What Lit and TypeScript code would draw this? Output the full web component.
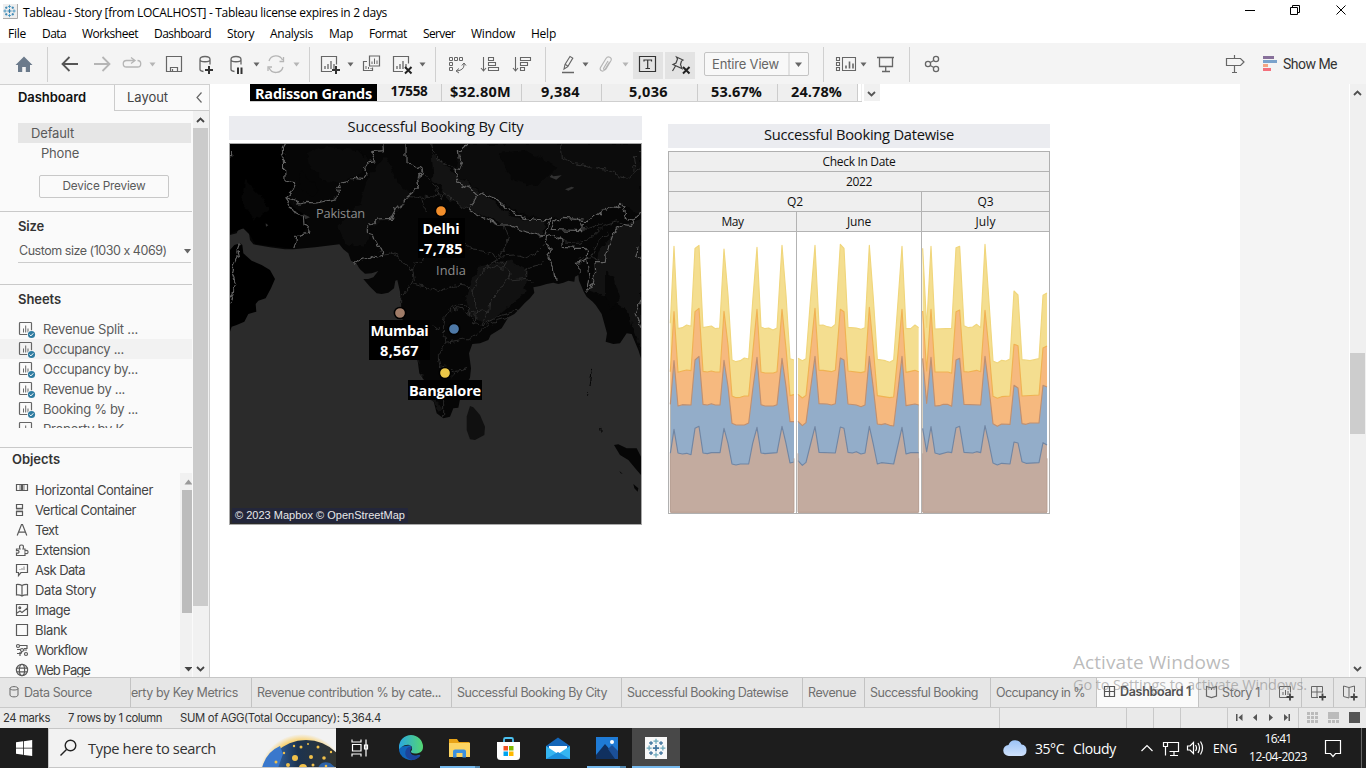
import { LitElement, html, svg, css } from "lit";
import { customElement, property } from "lit/decorators.js";

/** A single line of text tracked so that it spans a given width. */
@customElement("fit-text")
class FitText extends LitElement {
  @property() text = "";
  @property({ type: Number }) w = 0;
  static styles = css`
    :host { display: inline-block; flex: none; white-space: pre; text-align: left; }
    span { display: inline-block; margin-right: -4px; }
  `;
  render() { return html`<span>${this.text}</span>`; }
  updated() {
    this.style.width = this.w + "px";
    const s = this.renderRoot.querySelector("span") as HTMLElement;
    s.style.letterSpacing = "0px";
    const n = s.getBoundingClientRect().width;
    s.style.letterSpacing = (this.w - n) / Math.max(1, this.text.length) + "px";
  }
}

const T = (text: string, w: number, cls = "") => html`<fit-text class=${cls} .text=${text} .w=${w}></fit-text>`;
const I = (x: number, y: number, w: number, h: number, body: unknown, cls = "") =>
  html`<svg class=${"ic " + cls} width=${w} height=${h} viewBox="${x} ${y} ${w} ${h}">${body}</svg>`;

const caret = (x: number, c = "#666") => svg`<path d="M${x} 62.5h6l-3 4z" fill=${c}/>`;
const sep = (x: number) => svg`<path d="M${x}.5 47v35" stroke="#d0d0d0"/>`;
const bars = (x: number, y: number) => svg`<path d="M${x} ${y}v-3M${x + 3} ${y}v-5M${x + 6} ${y}v-8M${x + 9} ${y}v-5" stroke="#666" stroke-width="1.3"/>`;
const plus = (x: number, y: number) => svg`<path d="M${x - 4} ${y}h8M${x} ${y - 4}v8" stroke="#333" stroke-width="2"/>`;
const cross = (x: number, y: number) => svg`<path d="M${x - 3} ${y - 3}l6.5 6.5m0-6.5l-6.5 6.5" stroke="#222" stroke-width="2"/>`;
const cyl = (x: number) => svg`<path d="M${x} 59.5c0-4 10-4 10 0c0 3-10 3-10 0v10q0 1.500 3.500 2M${x + 10} 59.500v5" fill="none" stroke="#666" stroke-width="1.3"/>`;

const CLUSTER = (x: number, y: number, s: number, c1: string, c2: string) => svg`<g transform="translate(${x} ${y}) scale(${s})" fill="none">
  <path d="M-2.500 0h5M0-2.500v5" stroke=${c1} stroke-width="1.4"/>
  <path d="M-2-5.500h4M0-7.500v4M-2 5.500h4M0 3.500v4M-7.500 0h4M-5.500-2v4M3.500 0h4M5.500-2v4" stroke=${c2}/>
  <path d="M-5.500-4h3M-4-5.500v3M2.500-4h3M4-5.500v3M-5.500 4h3M-4 2.500v3M2.500 4h3M4 2.500v3" stroke=${c1} stroke-width="1.100"/></g>`;

const TOOLS = [
  I(0, 43, 60, 41, svg`<path d="M15.500 65l8.500-8.500 8.500 8.500h-2.500v7h-4.200v-5h-3.600v5h-4.200v-7z" fill="#6b7a8b"/>${sep(47)}`),
  I(60, 43, 30, 41, svg`<path d="M78 64h-15M69.500 57l-7 7 7 7" fill="none" stroke="#555" stroke-width="1.8"/>`),
  I(90, 43, 30, 41, svg`<path d="M94 64h15M102.500 57l7 7-7 7" fill="none" stroke="#b5b5b5" stroke-width="1.8"/>`),
  I(120, 43, 43, 41, svg`<path d="M134 60.500h-7.500a3.200 3.200 0 0 0 0 6.500h11a3.200 3.200 0 0 0 0-6.500M131 57.500l4 3-4 3" fill="none" stroke="#b5b5b5" stroke-width="1.300"/>${caret(149.500, "#b5b5b5")}`),
  I(163, 43, 30, 41, svg`<path d="M166.500 56.500h15v15h-15zM170.500 71v-3.500h7v3.500M172.500 69v2.500" fill="none" stroke="#666" stroke-width="1.200"/>`),
  I(193, 43, 32, 41, svg`${cyl(200)}${plus(209, 70)}`),
  I(225, 43, 38, 41, svg`${cyl(231)}<path d="M238 67.500v6.500M241.500 67.500v6.500" stroke="#333" stroke-width="2"/>${caret(253.500)}`),
  I(263, 43, 54, 41, svg`<path d="M269 61a7.300 7.300 0 0 1 13.500-1M283 67a7.300 7.300 0 0 1-13.800 1M283.500 57v4.500h-4M268 71v-4h4" fill="none" stroke="#b5b5b5" stroke-width="1.300"/>${caret(293.500, "#b5b5b5")}${sep(309)}`),
  I(317, 43, 42, 41, svg`<path d="M332 71.500h-10.500v-15h15v8" fill="none" stroke="#666" stroke-width="1.200"/>${bars(325, 69)}${plus(336, 70)}${caret(347.500)}`),
  I(359, 43, 30, 41, svg`<path d="M369.500 56h10v10h-10zM367 61.500h-3.500v9h9v-3" fill="none" stroke="#666" stroke-width="1.200"/><path d="M372 64v-2.500M374.500 64v-5.500M377 64v-3.500M366 69v-3M368.500 69v-2M371 69v-1" stroke="#666"/>`),
  I(389, 43, 56, 41, svg`<path d="M403 71.500h-9.500v-15h15v7" fill="none" stroke="#666" stroke-width="1.200"/>${bars(397, 69)}${cross(408, 70)}${caret(419.500)}${sep(435)}`),
  I(445, 43, 33, 41, svg`<path d="M449.500 57.500h3v3h-3zM454.500 57.500h3v3h-3zM459.500 57.500h3v3h-3zM449.500 62.500h3v3h-3zM449.500 67.500h3v3h-3zM464 63v2q0 5-7 6M461.800 65.500l2.200-2.500 2 2.500M459 68.500l-3 2.500 3 2" fill="none" stroke="#666"/>`),
  I(478, 43, 32, 41, svg`<path d="M483.500 57v14M481 68l2.500 3 2.500-3M488.500 57.500h5v3h-5zM488.500 62.500h7v3h-7zM488.500 67.500h10v3h-10z" fill="none" stroke="#666" stroke-width="1.100"/>`),
  I(510, 43, 45, 41, svg`<path d="M515.500 57v14M513 68l2.500 3 2.500-3M520.500 57.500h10v3h-10zM520.500 62.500h7v3h-7zM520.500 67.500h4v3h-4z" fill="none" stroke="#666" stroke-width="1.100"/>${sep(545)}`),
  I(555, 43, 38, 41, svg`<path d="M564 69l1-4.500 5-8 2.800 1.600-5 8.500-3.800 2.400zM565.500 64.500l2.500 1.700" fill="none" stroke="#666" stroke-width="1.100"/><path d="M562 72.500h12" stroke="#666" stroke-width="1.500"/>${caret(582.500)}`),
  I(593, 43, 40, 41, svg`<path d="M609.500 62l-4.500 7.500c-2 3-6 1-4.500-2l5.500-9c2-3 6.500-1 5 2l-5 8.500c-1 1.500-3 .5-2.200-1l4.200-7" fill="none" stroke="#b5b5b5" stroke-width="1.200"/>${caret(622.500, "#b5b5b5")}`),
  I(633, 43, 32, 41, svg`<path d="M633 52h30v27h-30z" fill="#e3e3e3"/><path d="M639.500 56.500h16v15h-16zM644 61.500v-1.500h7.500v1.500M647.700 60v8M645.500 68.500h4.500" fill="none" stroke="#333" stroke-width="1.200"/>`),
  I(665, 43, 39, 41, svg`<path d="M665 52h30v27h-30z" fill="#e3e3e3"/><path d="M676.500 57l6.500 3-1.500 1-1 3.500 1.500 4-9-4 3-1.500 1.500-4zM675.500 66l-3 5" fill="none" stroke="#444" stroke-width="1.200"/>${cross(686, 70)}`),
];

const TOOLS2 = [
  I(809, 43, 65, 41, svg`${sep(823)}<path d="M836.500 57.500h3v3h-3zM836.500 62.500h3v3h-3zM836.500 67.500h3v3h-3zM842.500 57.500h13v13h-13z" fill="none" stroke="#666" stroke-width="1.100"/><path d="M846 68.500v-3M849.500 68.500v-7M853 68.500v-5" stroke="#666" stroke-width="1.600"/>${caret(860.500)}`),
  I(874, 43, 45, 41, svg`<path d="M877 57.500h17M879.500 58v8.500h13v-8.500M885.700 67v4M882 71.500h8" fill="none" stroke="#666" stroke-width="1.300"/>${sep(909)}`),
  I(919, 43, 30, 41, svg`<g fill="none" stroke="#666" stroke-width="1.300"><circle cx="928" cy="64" r="2.600"/><circle cx="936" cy="59" r="2.600"/><circle cx="936" cy="69" r="2.600"/><path d="M930.300 62.500l3.500-2M930.300 65.500l3.500 2"/></g>`),
];

const SHEETS: [string, number][] = [["Revenue Split ...", 95], ["Occupancy ...", 81], ["Occupancy by...", 95], ["Revenue by ...", 82], ["Booking % by ...", 95], ["Property by K", 81]];
const sheetIcon = () => I(18, 319, 24, 20, svg`<rect x="19.500" y="322.500" width="12" height="12" rx=".8" fill="none" stroke="#666" stroke-width="1.200"/><path d="M23.500 332.500v-4M25.700 332.500v-7M28 332.500v-4" stroke="#666"/><circle cx="31.500" cy="334.500" r="4.300" fill="#fafafa"/><circle cx="31.500" cy="334.500" r="3.600" fill="#2f7ba0"/><path d="M29.600 334.500l1.300 1.400 2.400-2.600" fill="none" stroke="#fff"/>`);

const g = (d: unknown) => I(14, 0, 18, 20, svg`<g fill="none" stroke="#5a5a5a" stroke-width="1.200">${d}</g>`);
const OBJECTS: [string, number, unknown][] = [
  ["Horizontal Container", 118, g(svg`<path d="M19 5h6v6h-6z" fill="#bbb" stroke="none"/><path d="M16.500 4.500h5v6h-5zM22.500 4.500h5v6h-5z"/>`)],
  ["Vertical Container", 101, g(svg`<path d="M16 7.500h7v5h-7z" fill="#bbb" stroke="none"/><path d="M16.500 4.500h6v4h-6zM16.500 11.500h6v4h-6z"/>`)],
  ["Text", 23, g(svg`<path d="M17.200 15.500l4.300-11h1l4.300 11M18.500 12.200h7"/>`)],
  ["Extension", 55, g(svg`<path d="M16.500 9h3.500q-1.500-4 1.500-4t1.500 4h2v2q3-1.500 3 1t-3 1v2.500h-8.500v-2.500q2.500.5 2.500-1.200t-2.500-1.200z"/>`)],
  ["Ask Data", 50, g(svg`<path d="M16.500 4.500h11v8h-6.500l-2.500 3v-3h-2z"/><path d="M20 10v-1M22 10v-2M24 10v-3.500" stroke="#999"/>`)],
  ["Data Story", 61, g(svg`<path d="M22 5.500q-2-1.200-5.500-1v10.500q3.500-.2 5.500 1q2-1.200 5.500-1v-10.500q-3.500-.2-5.500 1v10.500"/>`)],
  ["Image", 35, g(svg`<path d="M16.500 4.500h11v11h-11zM17 13l3-2 2 1.500 5.500-4.500"/><circle cx="19.800" cy="7.800" r=".9"/>`)],
  ["Blank", 32, g(svg`<path d="M16.500 4.500h11v11h-11z"/>`)],
  ["Workflow", 52, g(svg`<circle cx="18" cy="6" r="1.500"/><circle cx="22" cy="10" r="1.500"/><circle cx="26" cy="14" r="1.500"/><path d="M20 5.500h7v3h-3M17 9.500h3M17 13.500h4l1-2M20 12v4M24 10h3"/>`)],
  ["Web Page", 55, g(svg`<circle cx="22" cy="10" r="5.600"/><ellipse cx="22" cy="10" rx="2.600" ry="5.600"/><path d="M16.500 8.200h11M16.500 11.800h11"/>`)],
];

/* Upper edge of each stacked band, one list per month pane (three units to a pixel). */
const MONTHS = [
  { x0: 31, x1: 402, bands: [
    "31,625 42,394 54,641 67,638 80,630 93,634 105,400 117,391 129,638 154,633 166,641 179,639 192,402 204,540 216,735 228,740 241,737 253,729 266,732 278,560 291,397 303,636 315,641 326,639 339,645 351,639 366,391 378,540 390,731 402,735",
    "31,770 42,590 54,772 67,768 80,765 93,767 105,590 117,580 129,769 142,771 154,768 166,771 180,771 192,589 204,690 216,843 228,848 241,847 253,843 266,843 278,715 291,583 303,771 315,774 340,774 351,770 366,583 378,700 390,842 402,839",
    "31,868 42,737 54,873 67,869 93,870 105,735 117,724 129,868 142,870 154,866 166,870 180,870 192,736 204,815 216,925 228,930 253,930 266,924 278,825 291,727 303,869 315,873 340,873 351,869 366,730 378,815 390,920 402,920",
    "31,1015 42,943 54,1014 67,1017 80,1015 93,1019 105,940 117,934 129,1014 142,1016 154,1013 180,1013 192,940 204,985 216,1047 228,1050 241,1047 266,1047 278,985 291,937 303,1014 315,1016 351,1013 366,934 378,985 390,1044 402,1041"] },
  { x0: 414, x1: 776, bands: [
    "414,730 427,737 438,731 451,560 465,391 477,631 489,630 502,635 514,638 526,628 541,388 552,400 564,637 589,639 603,643 615,638 628,391 640,550 652,733 676,737 689,742 701,735 714,560 726,394 738,641 752,641 765,630 776,638",
    "414,838 427,849 438,841 451,715 465,580 477,766 489,766 514,770 526,766 541,583 552,590 564,768 603,773 615,770 628,577 640,700 652,842 689,848 701,846 714,715 726,583 738,772 765,766 776,770",
    "414,919 427,932 438,923 451,825 465,724 477,866 502,867 514,870 526,866 541,729 552,735 564,867 589,870 603,875 615,870 628,724 640,820 652,927 664,929 676,926 689,931 701,933 714,825 726,724 738,872 765,867 776,870",
    "414,1037 427,1051 438,1042 451,990 465,935 477,1012 526,1014 541,936 552,940 564,1012 577,1014 589,1010 603,1017 615,1014 628,934 640,988 652,1047 664,1043 701,1047 714,990 726,937 738,1017 752,1013 776,1013"] },
  { x0: 788, x1: 1161, bands: [
    "788,400 800,637 813,394 825,642 875,640 888,398 899,394 912,632 925,638 938,636 950,628 962,638 975,388 987,560 999,738 1012,744 1025,736 1038,738 1050,732 1062,528 1074,540 1086,734 1110,737 1137,731 1149,541 1161,534",
    "788,588 800,768 813,583 825,771 864,771 875,775 888,590 899,585 912,770 925,771 950,766 962,770 975,586 987,705 999,844 1012,850 1025,845 1050,843 1062,688 1074,692 1086,843 1137,840 1149,699 1161,693",
    "788,730 800,865 813,727 825,873 838,872 850,868 862,868 875,874 888,735 899,730 912,868 962,870 975,724 987,820 999,926 1012,934 1025,927 1050,928 1062,811 1074,819 1086,926 1098,928 1110,924 1137,924 1149,811 1161,816",
    "788,940 800,1010 813,935 825,1014 838,1018 864,1011 875,1013 888,938 899,934 912,1012 938,1014 950,1010 962,1013 975,932 987,985 999,1044 1012,1050 1025,1045 1050,1047 1062,981 1074,984 1086,1040 1098,1045 1137,1043 1149,983 1161,990"] },
];
const FILLS = ["#f4de90", "#f6b97f", "#93adc9", "#c3ab9f"];
const LINES = ["#f0d67c", "#f0b252", "#c09070", "#7086a4"];

const chart = () => html`<svg class="block" width="380" height="281" viewBox="27 351 1140 843">
  ${MONTHS.map(m => svg`${m.bands.map((b, i) => svg`<polygon points="${b} ${m.x1},1191 ${m.x0},1191" fill=${FILLS[i]}/>`)}
    ${m.bands.map((b, i) => svg`<polyline points=${b} fill="none" stroke=${LINES[i]} stroke-width="3.400" stroke-linejoin="round"/>`)}
    <path d="M${m.x0} 1192H${m.x1}" stroke="#b09486" stroke-width="3"/>
    <path d="M${m.x0} 1015V1191M${m.x1} 1030V1191" stroke="#b79c8f" stroke-width="2.500"/>`)}
  <path d="M409.500 351v843M784.500 351v843" stroke="#b3b3b3" stroke-width="3"/></svg>`;

const map = () => html`<svg class="block" width="411" height="380" viewBox="15 102 1233 1140">
  <defs><filter id="rough" filterUnits="userSpaceOnUse" x="0" y="90" width="1270" height="1170" color-interpolation-filters="sRGB"><feTurbulence type="fractalNoise" baseFrequency=".05" numOctaves="2" seed="4"/><feDisplacementMap in="SourceGraphic" scale="22" xChannelSelector="R" yChannelSelector="G"/></filter></defs>
  <path d="M15 102H1248V1242H15z" fill="#2b2b2b"/>
  <g fill="#060606">
  <path d="M15 102H1248V745L1240 720 1220 672 1205 670 1185 700 1165 702 1142 695 1146 670 1130 612 1112 585 1103 575 1085 560 1076 545 1070 530 1062 512 1060 495 1050 500 1048 515 1030 512 1015 518 1000 522 985 518 965 522 945 528 925 532 928 548 915 565 900 578 880 600 868 612 850 622 830 655 797 675 790 690 765 700 742 702 732 730 738 775 735 803 722 825 712 850 705 868 700 893 685 895 675 920 655 925 635 910 625 870 600 815 583 790 578 752 568 700 555 675 535 640 528 605 525 545 517 510 511 512 507 535 490 548 470 552 455 550 435 530 415 507 430 507 445 502 460 483 440 490 420 491 405 478 393 460 378 452 370 430 355 418 343 403 270 412 205 418 180 418 135 412 85 403 75 390 72 370 55 355 40 358 35 370 15 375z"/>
  <path d="M15 420L28 405 45 400 52 405 55 430 80 452 110 465 135 480 150 507 138 535 122 565 100 572 92 582 94 605 70 612 58 635 35 645 20 650 15 665z" fill="#000"/>
  <path d="M735 888L725 920 725 960 735 988 750 990 778 975 780 950 765 915 745 892z" fill="#101010"/>
  <path d="M1167 1005L1180 1003 1205 1015 1235 1015 1248 1040V1095L1235 1080 1210 1050 1185 1035zM1225 1122L1240 1135 1238 1145 1228 1135zM1183 1083l10 8-6-1z"/>
  </g>
  <path d="M15 102H182L178 145 182 210 208 220 183 267 210 295 240 315 248 350 208 400 203 416 90 402 75 375 55 355 15 372z" fill="#000"/>
  <g fill="#0c0c0c" filter="url(#rough)">
    <path d="M735 102H1248V320L1200 285 1140 300 1070 335 1000 322 970 330 900 315 830 275 770 245 700 200 690 180 705 120z"/>
    <path d="M240 130L300 110 400 120 440 160 400 190 350 220 300 210 260 180z" fill="#0a0a0a"/>
    <path d="M430 200L480 140 520 220 560 260 500 320 440 350 420 410 360 400 340 350 400 290z"/>
    <path d="M620 130L700 200 770 250 860 320 960 335 950 375 850 350 740 300 670 270 625 205z" fill="#131313"/>
    <path d="M1120 430L1180 350 1248 330V720L1205 600 1150 560 1090 540 1110 470z" fill="#121212"/>
    <path d="M760 470L850 450 910 480 900 550 840 600 790 640 740 620 720 560z" fill="#111"/>
    <path d="M545 660L575 700 590 800 625 850 650 900 640 905 600 820 575 740z" fill="#121212"/>
    <path d="M60 210L110 260 130 300 90 330 50 280zM230 180l50 60-20 20-40-30z" fill="#060606"/>
    <path d="M1140 480L1165 500 1185 560 1160 600 1140 560zM820 130L900 120 1000 170 940 230 860 210z" fill="#070707"/>
  </g>
  <g fill="none" stroke="#343434" stroke-width="2.400" stroke-linejoin="round" filter="url(#rough)">
    <path d="M553 260L575 262 590 265 610 258 625 262 645 250 648 270 655 245 670 255 688 275 715 290 737 300M590 265L595 290 605 300M645 250L620 215 598 190M620 102L625 120 640 150 690 180"/>
    <path d="M475 435L500 432 520 440 535 460 550 465 560 480 565 510 555 530 530 560 530 590M565 520L600 530 640 545 690 525 725 528 745 545 755 510 790 465 815 450 830 430 845 405 850 380 838 348M560 480L570 460 590 455 600 440M720 400L745 420 780 425 805 435 815 455 840 470 855 495 850 510 905 505 925 520M830 438L870 435 900 445 940 425 955 410 965 398M790 465L835 478 845 450M855 495L830 530 815 550 795 570 790 610 770 600 735 610 680 590 660 620M905 505L900 480 920 470 945 465 955 450M745 545L755 600 750 640M660 620L655 660 660 700 640 740 645 770M680 600L700 585 730 590 745 640 770 645 790 600M645 770L660 765 690 785 735 775M660 700L720 690 760 670 790 640 850 622M645 660L620 650M770 645L820 620 850 610 880 600M650 780L690 790 680 800M653 925V870M583 790L600 815"/>
    <path d="M1010 395L1060 400 1090 390 1130 350 1180 335 1195 345M1060 450L1100 440 1115 400 1150 370M1075 360L1130 340M1008 102L1012 140 1045 160 1100 170 1160 185 1180 200 1210 205 1235 180 1245 175M1245 120L1225 140 1230 180M1100 440L1120 450"/>
  </g>
  <g fill="none" stroke="#636363" stroke-width="3.500" stroke-linejoin="round" filter="url(#rough)">
    <path d="M187 92L175 112 176 130 171 137 178 150 180 210 205 215 211 225 205 240 195 250 183 266 205 272 225 282 245 277 275 279 305 272 335 267 340 245 337 235 350 218 375 215 390 202 415 206 423 195 420 180 435 155 452 152 440 125 475 122 473 92"/>
    <path d="M183 266L195 285 205 303 235 318 237 345 250 350 247 367 213 378 210 395 203 416"/>
    <path d="M543 92L543 155 560 165 577 172 590 180 597 187 575 205 578 230 560 250 545 262 530 288 512 298 497 325 457 327 445 340 430 355 430 370 445 375 450 390 468 420 472 440 455 444 440 440 428 448 412 447 390 460"/>
    <path d="M730 98L720 108 700 125 703 145 715 160 705 178 690 175 695 210 712 225 735 235 755 255 770 248 790 258 810 265 835 282 845 295 865 305 890 320 915 325 950 330 965 328 978 325 970 340 965 372 940 375 900 365 850 345 820 345 780 325 750 310 735 302 745 275 755 255"/>
    <path d="M978 358L985 340 1010 322 1060 325 1075 345 1073 362 1020 360 978 358M1060 330L1080 335 1110 320 1130 305 1145 290 1175 292 1188 280 1200 290 1195 300 1205 310 1195 320 1225 330 1220 350 1195 345 1170 360 1160 385 1145 425 1140 455 1110 455 1112 490 1102 520 1085 545M965 378L985 375 1010 390 1012 412 1050 415 1080 415 1088 425 1085 450 1092 500 1085 540M1085 450L1065 458 1050 460 1065 475 1065 490M965 378L962 395 975 405 980 425 965 430 975 450 985 470 990 515M1248 310L1225 325M1240 410L1232 440 1248 450M1248 565L1230 610 1248 650"/>
    <path d="M43 400L35 420 40 440 28 465 22 490 32 520 20 560 15 580M17 125v25"/>
    <path d="M1100 775l-3 15-2 20-3 15M1088 853v4M1124 957l3 8" stroke="#050505"/>
  </g>
  <path d="M1010 196l-25 3-5-5-6 7 20 8 6-5zM1020 238l20-8 8 3-18 9zM235 312l20 10-14 6zM122 340l8 6-7 4z" fill="#333"/>
</svg>`;

@customElement("app-root")
class AppRoot extends LitElement {
  static styles = css`
    :host { display: block; width: 1366px; height: 768px; overflow: hidden; position: relative; background: #fff;
      --ui: "Open Sans", "Noto Sans", sans-serif; --bt: "Inter", "Roboto", sans-serif; font-family: var(--ui); color: #000; }
    * { box-sizing: border-box; }
    .page { display: flex; flex-direction: column; height: 768px; }
    .ic { flex: none; display: block; }
    .block { display: block; }
    .row { display: flex; align-items: center; }
    .grow { flex: 1; }
    .title { height: 24px; font-size: 12px; padding-left: 2px; flex: none; }
    .menu { height: 19px; flex: none; gap: 16px; padding-left: 8px; font-size: 12px; line-height: 19px; }
    .tools { height: 41px; flex: none; background: #f4f4f4; }
    .select { width: 105px; height: 24px; border: 1px solid #c4c4c4; border-radius: 2px; background: #f8f8f8; display: flex; align-items: center; padding-left: 7px; color: #666; font: 13px/20px var(--bt); }
    .showme { font: 14px "Roboto", sans-serif; color: #333; padding-left: 5px; width: 88px; }
    .body { flex: none; height: 593px; display: flex; }
    .side { width: 210px; flex: none; background: #fafafa; border-right: 1px solid #d0d0d0; border-top: 1px solid #d0d0d0; color: #5a5a5a; font: 13px/20px var(--bt); }
    .stabs { height: 26px; display: flex; }
    .stab1 { width: 114px; padding: 2px 0 0 18px; font-weight: 600; color: #111; }
    .stab2 { width: 95px; padding: 2px 0 0 12px; border-left: 1px solid #ccc; border-bottom: 1px solid #ccc; display: flex; color: #444; }
    .sbody { display: flex; height: 566px; }
    .panel { width: 192px; }
    .scr { width: 17px; background: #f1f1f1; margin-left: 1px; }
    .devices { padding: 12px 0 0 18px; height: 100px; }
    .default { background: #e6e6e6; width: 173px; height: 20px; padding-left: 13px; }
    .phone { padding-left: 23px; height: 20px; }
    .btn { margin: 12px 0 0 21px; width: 130px; height: 23px; border: 1px solid #c8c8c8; border-radius: 2px; font-size: 11.800px; line-height: 20px; text-align: center; }
    .size { border-top: 1px solid #c9c9c9; height: 73px; padding: 4px 0 0 18px; }
    .head { font-weight: 600; color: #333; display: block; }
    .combo { display: flex; justify-content: space-between; width: 173px; height: 22px; margin-top: 5px; padding-left: 1px; border-bottom: 1px solid #ccc; font-size: 12.500px; }
    .sheets { border-top: 1px solid #c9c9c9; height: 163px; padding-top: 4px; }
    .sheets .head { padding-left: 18px; }
    .slist { height: 109px; overflow: hidden; margin-top: 10px; }
    .srow { height: 20px; display: flex; padding-left: 18px; gap: 1px; }
    .srow.on { background: #f2f2f2; }
    .objs { border-top: 1px solid #c9c9c9; padding-top: 1px; height: 229px; }
    .objs .head { padding-left: 12px; height: 24px; }
    .osplit { display: flex; }
    .olist { width: 180px; height: 204px; padding-top: 7px; overflow: hidden; color: #444; }
    .orow { height: 20px; display: flex; padding-left: 14px; gap: 3px; }
    .canvas { width: 1030px; padding: 0 0 0 19px; background: #fff; }
    .off { width: 109px; background: #f4f4f4; }
    .vs { width: 17px; background: #f0f0f0; border-left: 1px solid #fff; }
    .trow { height: 32px; padding-left: 21px; display: flex; align-items: flex-start; font-weight: 700; font-size: 14.500px; }
    .cells { width: 612px; height: 18px; display: flex; border-bottom: 1.500px solid #cfcfcf; background: #efefef; line-height: 16px; overflow: hidden; }
    .cell { display: flex; justify-content: center; border-right: 1px solid #ccc; flex: none; color: #111; padding-right: 2px; }
    .c0 { width: 127px; background: #000; color: #fff; border: 0; height: 18px; line-height: 19px; padding: 0; }
    .c1 { width: 65px; font-size: 13.500px; padding: 0; line-height: 14px; } .c2 { width: 80px; } .c3 { width: 80px; } .c4 { width: 96px; } .c5 { width: 80px; } .c6 { width: 80px; }
    .c7 { width: 3px; background: #fff; border: 0; padding: 0; }
    .dd { margin-left: 2px; }
    .vizzes { display: flex; align-items: flex-start; gap: 26px; }
    .vt { height: 24px; background: #ebecf0; text-align: center; font-size: 14.700px; line-height: 20px; color: #111; margin-bottom: 3px; }
    .v1 { width: 413px; } .v2 { width: 382px; margin-top: 8px; }
    .frame { border: 1px solid #a9a9a9; height: 382px; position: relative; overflow: hidden; }
    .pin { position: absolute; background: #000; color: #fff; font-weight: 700; font-size: 14.500px; line-height: 20px; padding-top: 1px; }
    .pin fit-text { display: block; margin: 0 auto; }
    .delhi { left: 188px; top: 74px; width: 47px; height: 40px; padding-right: 1px; }
    .mumbai { left: 139px; top: 176px; width: 61px; height: 40px; }
    .bang { left: 178px; top: 236px; width: 74px; height: 20px; }
    .dots { position: absolute; left: 0; top: 0; }
    .mlabel { position: absolute; color: #8d8d8d; font-size: 12.800px; line-height: 16px; }
    .pk { left: 86px; top: 61px; } .ind { left: 206px; top: 118px; }
    .attr { position: absolute; left: 2px; top: 364px; background: #23263a; color: #e8e8e8; font: 11px/15px "Liberation Sans", sans-serif; padding: 0 3px; height: 15px; }
    .grid { border: 1px solid #b0b0b0; height: 363px; }
    .hr { display: flex; height: 20px; border-bottom: 1px solid #b3b3b3; background: #efefef; font-size: 12px; line-height: 19px; text-align: center; color: #111; }
    .hr > div { border-right: 1px solid #b3b3b3; }
    .hr > div:last-child { border: 0; flex: 1; }
    .q2 { width: 253px; } .m1 { width: 128px; } .m2 { width: 125px; }
    .tabs { flex: none; height: 31px; display: flex; background: #e6e6e6; border-top: 1px solid #c6c6c6; border-bottom: 1px solid #c9c9c9; font: 12.500px/29px var(--bt); color: #707070; }
    .tab { flex: none; border-right: 1px solid #c3c3c3; display: flex; overflow: hidden; padding-left: 5px; }
    .t0 { width: 131px; padding-left: 4px; } .t1 { width: 121px; padding-left: 0; } .t2 { width: 200px; } .t3 { width: 170px; } .t4 { width: 181px; } .t5 { width: 62px; } .t6 { width: 126px; } .t7 { width: 106px; }
    .t8 { width: 102px; background: #fafafa; color: #505050; font-weight: 600; line-height: 27px; } .t9 { width: 71px; } .t10 { width: 32px; padding: 0; }
    .status { flex: none; height: 20px; background: #eaeaea; font: 11.300px/20px var(--bt); color: #333; display: flex; gap: 18px; padding-left: 3px; }
    .task { flex: none; height: 40px; background: #1d1d1d; color: #fff; display: flex; align-items: center; }
    .search { width: 288px; height: 40px; background: #f2f2f2; border: 1px solid #c6c6c6; border-right: 0; color: #333; font-size: 14.700px; display: flex; align-items: center; }
    .wx { display: flex; align-items: center; gap: 9px; font-size: 14px; padding-left: 8px; }
    .eng { font-size: 12px; padding-left: 8px; } 
    .clock { display: flex; flex-direction: column; align-items: center; width: 58px; margin: 0 1px 0 12px; font-size: 12px; line-height: 18px; }
    .wm { position: absolute; left: 1073px; top: 648px; color: rgba(130,130,130,.55); font-size: 14.500px; }
    .wm1 { display: block; font-size: 19px; line-height: 28px; } .wm2 { display: block; line-height: 17px; }
  `;

  render() {
    return html`<div class="page">
      <div class="row title">
        ${I(2, 0, 21, 24, svg`<path d="M3 4h14v14h-14z" fill="#eee"/><path d="M3 18.500h14.500V4" fill="none" stroke="#aaa"/>${CLUSTER(9.500, 11, .82, "#2d7fb0", "#3c8fbd")}`)}
        ${T("Tableau - Story [from LOCALHOST] - Tableau license expires in 2 days", 364)}
        <div class="grow"></div>
        ${I(1236, 0, 130, 24, svg`<g fill="none" stroke="#000"><path d="M1245 10.500h10M1290.500 7.500h7v7h-7zM1292.500 7v-1.500h7v7h-1.500M1336.500 5.500l9 9m0-9l-9 9"/></g>`)}
      </div>
      <div class="row menu">${([["File", 18], ["Data", 24], ["Worksheet", 56], ["Dashboard", 57], ["Story", 27], ["Analysis", 43], ["Map", 24], ["Format", 38], ["Server", 32], ["Window", 44], ["Help", 25]] as [string, number][]).map(m => T(m[0], m[1]))}</div>
      <div class="row tools">${TOOLS}
        <div class="select">${T("Entire View", 67)}<div class="grow"></div>${I(788, 52, 20, 22, svg`<path d="M789 52v24" stroke="#ccc"/><path d="M795 61.500h7l-3.500 4.500z" fill="#666"/>`)}</div>
        ${TOOLS2}<div class="grow"></div>
        ${I(1222, 43, 56, 41, svg`<path d="M1226.500 58.500h14l3.500 3.500-3.500 3.500h-14zM1234.500 55v3M1234.500 66v6M1232 72.500h5" fill="none" stroke="#666" stroke-width="1.200"/><path d="M1263 56h11v3h-11z" fill="#87709a"/><path d="M1263 60h14v3h-14z" fill="#7ba3cc"/><path d="M1263 64h5v3h-5z" fill="#f4a582"/><path d="M1263 68h8v3h-8z" fill="#f4707c"/>`)}
        <div class="showme">${T("Show Me", 54)}</div>
      </div>
      <div class="body">
        <div class="side">
          <div class="stabs"><div class="stab1">${T("Dashboard", 68)}</div><div class="stab2">${T("Layout", 41)}${I(168, 86, 40, 22, svg`<path d="M201.500 91.500l-4.500 5 4.500 5" fill="none" stroke="#666" stroke-width="1.200"/>`)}</div></div>
          <div class="sbody">
            <div class="panel">
              <div class="devices"><div class="default">${T("Default", 43)}</div><div class="phone">${T("Phone", 38)}</div><div class="btn">${T("Device Preview", 83)}</div></div>
              <div class="size">${T("Size", 26, "head")}<div class="combo">${T("Custom size (1030 x 4069)", 149)}${I(183, 241, 8, 20, svg`<path d="M184 249h7l-3.500 4.500z" fill="#666"/>`)}</div></div>
              <div class="sheets">${T("Sheets", 43, "head")}<div class="slist">${SHEETS.map((s, i) => html`<div class=${i === 1 ? "srow on" : "srow"}>${sheetIcon()}${T(s[0], s[1])}</div>`)}</div></div>
              <div class="objs">${T("Objects", 48, "head")}<div class="osplit"><div class="olist">${OBJECTS.map(o => html`<div class="orow">${o[2]}${T(o[0], o[1])}</div>`)}</div>
                ${I(180, 473, 12, 204, svg`<path d="M180 473h12v204h-12z" fill="#f1f1f1"/><path d="M182 490h10v123h-10z" fill="#bcbcbc"/><path d="M184.500 484.500h8l-4-5z" fill="#999"/><path d="M184.500 667h8l-4 4.500z" fill="#444"/>`)}</div></div>
            </div>
            <div class="scr">${I(193, 111, 16, 566, svg`<path d="M193 128h15v478h-15z" fill="#cbcbcb"/><path d="M197 122l3.500-3.500 3.500 3.500M197 667l3.500 3.500 3.500-3.500" fill="none" stroke="#444" stroke-width="1.800"/>`)}</div>
          </div>
        </div>
        <div class="canvas">
          <div class="trow"><div class="cells">
            <div class="cell c0">${T("Radisson Grands", 117)}</div><div class="cell c1">${T("17558", 37)}</div><div class="cell c2">${T("$32.80M", 61)}</div><div class="cell c3">${T("9,384", 39)}</div><div class="cell c4">${T("5,036", 39)}</div><div class="cell c5">${T("53.67%", 51)}</div><div class="cell c6">${T("24.78%", 51)}</div><div class="cell c7"></div></div>
            ${I(864, 84, 16, 18, svg`<path d="M864 84h16v17h-16z" fill="#f0f0f0"/><path d="M868 92l3.500 3.500 3.500-3.500" fill="none" stroke="#555" stroke-width="1.800"/>`, "dd")}</div>
          <div class="vizzes">
            <div class="v1"><div class="vt">${T("Successful Booking By City", 176)}</div>
              <div class="frame">${map()}
                <div class="mlabel pk">${T("Pakistan", 49)}</div><div class="mlabel ind">${T("India", 30)}</div>
                <div class="pin delhi">${T("Delhi", 37)}${T("-7,785", 44)}</div>
                <div class="pin mumbai">${T("Mumbai", 58)}${T("8,567", 39)}</div>
                <div class="pin bang">${T("Bangalore", 72)}</div>
                <svg class="dots" width="411" height="380" viewBox="230 144 411 380" stroke="#000" stroke-width="1.500"><circle cx="441" cy="211" r="5.600" fill="#f28e2b"/><circle cx="400" cy="313" r="5.600" fill="#a07c68"/><circle cx="454" cy="329" r="5.600" fill="#4e79a7"/><circle cx="445" cy="373" r="5.600" fill="#edc948"/></svg>
                <div class="attr">${T("© 2023 Mapbox © OpenStreetMap", 170)}</div>
              </div></div>
            <div class="v2"><div class="vt">${T("Successful Booking Datewise", 190)}</div>
              <div class="grid"><div class="hr"><div>${T("Check In Date", 73)}</div></div><div class="hr"><div>${T("2022", 26)}</div></div>
                <div class="hr"><div class="q2">${T("Q2", 16)}</div><div>${T("Q3", 16)}</div></div>
                <div class="hr"><div class="m1">${T("May", 22)}</div><div class="m2">${T("June", 24)}</div><div>${T("July", 20)}</div></div>
                ${chart()}</div></div>
          </div>
        </div>
        <div class="off"></div>
        <div class="vs">${I(1350, 84, 16, 593, svg`<path d="M1350 353h15v81h-15z" fill="#cdcdcd"/><path d="M1354 95l3.500-3.500 3.500 3.500M1354 667l3.500 3.500 3.500-3.500" fill="none" stroke="#505050" stroke-width="1.800"/>`)}</div>
      </div>
      <div class="tabs">
        <div class="tab t0">${I(4, 678, 20, 28, svg`<path d="M10 688.500c0-2.500 8-2.500 8 0v6.500c0 2.500-8 2.500-8 0zc0 2 8 2 8 0" fill="none" stroke="#666"/>`)}${T("Data Source", 68)}</div>
        <div class="tab t1">${T("erty by Key Metrics", 107)}</div>
        <div class="tab t2">${T("Revenue contribution % by cate...", 184)}</div>
        <div class="tab t3">${T("Successful Booking By City", 150)}</div>
        <div class="tab t4">${T("Successful Booking Datewise", 161)}</div>
        <div class="tab t5">${T("Revenue", 48)}</div>
        <div class="tab t6">${T("Successful Booking", 108)}</div>
        <div class="tab t7">${T("Occupancy in %", 89)}</div>
        <div class="tab t8">${I(1102, 678, 18, 28, svg`<path d="M1104.500 686.500h10v10h-10zM1109.500 686.500v10M1104.500 691.500h10" fill="none" stroke="#555" stroke-width="1.200"/>`)}${T("Dashboard 1", 71)}</div>
        <div class="tab t9">${I(1204, 678, 18, 28, svg`<path d="M1211.500 688l-5-1.500v9.500l5 1.500 5-1.500v-9.500zv2" fill="none" stroke="#666" stroke-width="1.200"/>`)}${T("Story 1", 38)}</div>
        <div class="tab t10">${I(1270, 678, 31, 28, svg`<path d="M1287 697.500h-7.500v-11h11v6M1283 695v-3M1285.500 695v-5M1288 695v-4" fill="none" stroke="#666"/><path d="M1286.500 697h7M1290 693.500v7" stroke="#444" stroke-width="1.800"/>`)}</div>
        <div class="tab t10">${I(1302, 678, 31, 28, svg`<path d="M1318 697.500h-6.500v-11h11v6M1317 686.500v11M1311.500 692h11" fill="none" stroke="#666"/><path d="M1319 697h7M1322.500 693.500v7" stroke="#444" stroke-width="1.800"/>`)}</div>
        <div class="tab t10">${I(1334, 678, 31, 28, svg`<path d="M1349 698l-5.500-1.500v-10.500l5.500 1.500 5.500-1.500v6M1349 687.500v10.500" fill="none" stroke="#666"/><path d="M1350.500 697h7M1354 693.500v7" stroke="#444" stroke-width="1.800"/>`)}</div>
      </div>
      <div class="status">${T("24 marks", 47)}${T("7 rows by 1 column", 94)}${T("SUM of AGG(Total Occupancy): 5,364.4", 201)}<div class="grow"></div>
        ${I(996, 708, 370, 20, svg`<path d="M999.500 708v20M1126.500 708v20M1153.500 708v20M1180.500 708v20M1227.500 708v20M1298.500 708v20" stroke="#c9c9c9"/>
        <g fill="#555"><path d="M1236 714h1.500v7h-1.500zM1242.500 714v7l-4-3.500zM1257 714v7l-4-3.500zM1269 714v7l4-3.500zM1284 714v7l4-3.500zM1288.500 714h1.500v7h-1.500z"/></g>
        <g fill="#bbb">${[0, 4, 8].map(a => [0, 4, 8].map(b => svg`<path d="M${1307 + a} ${712 + b}h3v3h-3z"/>`))}<path d="M1328 712h11v7h-11zM1328 720h3v3h-3zM1332 720h3v3h-3zM1336 720h3v3h-3z"/></g><path d="M1349 712h11v11h-11z" fill="#555"/>`)}</div>
      <div class="task">
        ${I(0, 728, 48, 40, svg`<path d="M16 742.300l7-1v6.400h-7zM23.800 741.200l8.400-1.200v7.700h-8.400zM16 748.500h7v6.300l-7-1zM23.800 748.500h8.400v7.600l-8.400-1.200z" fill="#fff"/>`)}
        <div class="search">${I(49, 729, 39, 38, svg`<g fill="none" stroke="#222" stroke-width="1.400"><circle cx="70.500" cy="745.500" r="5.300"/><path d="M66.500 749.500l-6 6"/></g>`)}${T("Type here to search", 128)}<div class="grow"></div>
          ${I(258, 729, 78, 38, svg`<defs><radialGradient id="sun"><stop offset=".8" stop-color="#fbc94e"/><stop offset="1" stop-color="#f2f2f2"/></radialGradient><linearGradient id="gl"><stop offset="0" stop-color="#3f7fd0"/><stop offset=".4" stop-color="#1c3350"/><stop offset="1" stop-color="#3a3524"/></linearGradient></defs>
          <circle cx="302" cy="777" r="43" fill="url(#sun)"/><circle cx="306" cy="783" r="43" fill="url(#gl)"/><path d="M262 768q4-16 18-22l3 8-5 14z" fill="#3a78cc"/><path d="M318 768q3-8 12-5l6 5z" fill="#2d62a8"/>
          <g fill="#f0c04a">${([[295, 758, 3], [303, 768, 4], [311, 757, 2], [318, 747, 1.500], [324, 758, 1.800], [288, 765, 2], [301, 747, 1.500], [284, 753, 1.200], [294, 746, 1.200], [331, 752, 1.200], [313, 765, 1.500], [276, 762, 1.500], [308, 744, 1], [326, 766, 1.300]]).map(p => svg`<circle cx=${p[0]} cy=${p[1]} r=${p[2]}/>`)}</g>`)}</div>
        ${I(336, 728, 48, 40, svg`<path d="M352 742v-2.500M361 742v-2.500M352 739.500v2.500h9v-2.500M352.500 744.500h8.500v6.500h-8.500zM352 756.500v-2.500h9v2.500M366 739.500v17M364.500 745h3v4h-3z" fill="none" stroke="#fff" stroke-width="1.200"/>`)}
        ${I(384, 728, 51, 40, svg`<defs><linearGradient id="e1" x1="0" y1="0" x2="1" y2="0"><stop offset="0" stop-color="#2aa7e0"/><stop offset="1" stop-color="#54d672"/></linearGradient></defs><path d="M399 747a12 12 0 0 0 20 10c2-1.500 1-2.500-.5-2-6 2-10-1-9-6l2-4z" fill="#1166bb"/><path d="M399 747a12 12 0 0 1 24 0c0 5-4 6.500-8 6.500-3 0-4.500-1.200-4-2.200 2-2 1.500-6.500-3-6.500-5 0-8.500 3.500-9 5z" fill="url(#e1)"/><path d="M412 760c-6-1-8-6-6-10 1.500-3.500 5-4 6-2-3 2-2 7 3 7.800 2.500.4 4.500-.8 5.500-.6-2 3-5 4.800-8.500 4.800z" fill="#1c449b"/>`)}
        ${I(435, 728, 50, 40, svg`<path d="M449 739h8l2 3h10.500v4h-20.500z" fill="#e8a317"/><path d="M449 743h21v14h-21z" fill="#fcd462"/><path d="M453 757.500v-6q0-2 2-2h9q2 0 2 2v6h-3.500v-4.500h-6v4.500z" fill="#3b90df"/><path d="M440 766h35v2h-35z" fill="#76b9ed"/><path d="M475 766h5v2h-5z" fill="#5286ad"/>`)}
        ${I(485, 728, 50, 40, svg`<path d="M504 744v-4.500q0-1.500 1.500-1.500h6q1.500 0 1.500 1.500v4.500" fill="none" stroke="#4cc2f1" stroke-width="1.800"/><path d="M497 742h23v14.500q0 3.500-3.500 3.500h-16q-3.500 0-3.500-3.500z" fill="#fff"/><path d="M503.500 746h4.500v4.500h-4.500z" fill="#f25022"/><path d="M509 746h4.500v4.500h-4.500z" fill="#7fba00"/><path d="M503.500 751.500h4.500v4.500h-4.500z" fill="#00a4ef"/><path d="M509 751.500h4.500v4.500h-4.500z" fill="#ffb900"/>`)}
        ${I(535, 728, 50, 40, svg`<path d="M546 746l12-8.500 12 8.500v13h-24z" fill="#1466b8"/><path d="M549 746h18v8h-18z" fill="#fff"/><path d="M546 746l12 8 12-8v13h-24z" fill="#35b5f0"/><path d="M546 759l12-7 12 7z" fill="#1b8fdc"/>`)}
        ${I(585, 728, 47, 40, svg`<path d="M596 737h22v22h-22z" fill="#1f7bd6"/><path d="M596 755l9-11 13 15h-22z" fill="#10305f"/><path d="M608 749l4-4 6 6v8h-3z" fill="#1b4f97"/><circle cx="612" cy="742" r="2" fill="#fff"/><path d="M587 766h33v2h-33z" fill="#76b9ed"/><path d="M620 766h6v2h-6z" fill="#5286ad"/>`)}
        ${I(632, 728, 48, 40, svg`<path d="M632 728h48v40h-48z" fill="#484848"/><path d="M645 737h22v22h-22z" fill="#f8f8f8"/>${CLUSTER(656, 748, 1.250, "#4577a0", "#6aa7ba")}<path d="M632 766h48v2h-48z" fill="#76b9ed"/>`)}
        <div class="grow"></div>
        ${I(1000, 728, 27, 40, svg`<defs><linearGradient id="cl" x1="0" y1="0" x2="0" y2="1"><stop offset="0" stop-color="#9cc3f7"/><stop offset="1" stop-color="#cfe1fb"/></linearGradient></defs><path d="M1009 756a5.500 5.500 0 0 1-.5-11 7 7 0 0 1 13-.5 5.800 5.800 0 0 1 0 11.500z" fill="url(#cl)"/>`)}
        <div class="wx">${T("35°C", 29)}${T("Cloudy", 43)}</div>
        ${I(1116, 728, 89, 40, svg`<g fill="none" stroke="#fff" stroke-width="1.200"><path d="M1141.500 751l5.500-5.500 5.500 5.500M1168 742.500h10.500v9h-9M1174 752v3M1170 755.500h8M1163.500 742.500h4v4h-4zM1165.500 747v8.500M1187.500 746h2.500l3.500-3.500v11l-3.500-3.500h-2.500zM1195.500 745q2 3 0 6M1198 743q3 5 0 10M1200.500 741.500q4 6.500 0 13"/></g>`)}
        <div class="eng">${T("ENG", 24)}</div>
        <div class="clock">${T("16:41", 27)}${T("12-04-2023", 58)}</div>
        ${I(1308, 728, 58, 40, svg`<path d="M1325.500 740.500h15v13h-5l-2.500 3-2.500-3h-5z" fill="none" stroke="#fff" stroke-width="1.200"/><path d="M1361.500 728v40" stroke="#666"/>`)}
      </div>
    </div>
    <div class="wm">${T("Activate Windows", 157, "wm1")}${T("Go to Settings to activate Windows.", 234, "wm2")}</div>`;
  }
}
